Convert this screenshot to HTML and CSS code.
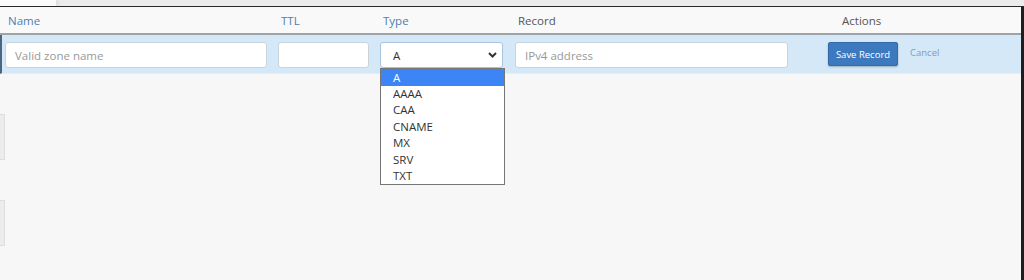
FILE: index.html
```html
<!DOCTYPE html>
<html lang="en">
<head>
<meta charset="UTF-8">
<title>Zone records</title>
<link rel="stylesheet" href="styles.css">
</head>
<body>
<div class="topbar"><div class="tab"></div></div>
<div class="panel">
  <div class="rec-head">
    <div class="th sortable">Name</div>
    <div class="th sortable">TTL</div>
    <div class="th sortable">Type</div>
    <div class="th">Record</div>
    <div class="th actions">Actions</div>
  </div>
  <div class="rec-edit">
    <div class="cell"><input class="field f-name" type="text" placeholder="Valid zone name"></div>
    <div class="cell"><input class="field f-ttl" type="text"></div>
    <div class="cell">
      <div class="select">
        <span>A</span>
        <svg class="chev" width="9" height="6" viewBox="0 0 9 6"><path d="M1 1l3.5 3.5L8 1" fill="none" stroke="#333" stroke-width="2"/></svg>
        <ul class="options">
          <li class="on">A</li>
          <li>AAAA</li>
          <li>CAA</li>
          <li>CNAME</li>
          <li>MX</li>
          <li>SRV</li>
          <li>TXT</li>
        </ul>
      </div>
    </div>
    <div class="cell"><input class="field f-rec" type="text" placeholder="IPv4 address"></div>
    <div class="cell act">
      <button class="btn">Save Record</button>
      <a class="cancel" href="#">Cancel</a>
    </div>
  </div>
  <div class="rest">
    <div class="stub"></div>
    <div class="stub"></div>
  </div>
</div>
</body>
</html>
```

FILE: styles.css
```css
*,*::before,*::after{margin:0;padding:0;box-sizing:border-box}
body{font-family:"Open Sans",sans-serif;font-size:11px;color:#444;background:#f7f7f7;width:1024px;height:280px;overflow:hidden}
.topbar{height:7px;background:#ececec;border-bottom:1px solid #2a2a2a}
.tab{width:56px;height:6px;background:#fafafa;box-shadow:2px 0 4px rgba(0,0,0,.08)}
.panel{border-right:3px solid #1e1e1e;height:273px;background:#f7f7f7}
.rec-head,.rec-edit{display:grid;grid-template-columns:273px 102px 135px 313px 1fr;padding-left:5px}
.rec-head{height:28px;align-items:center;background:#f9f9f9;border-bottom:2px solid #9ea3a8}
.th{padding-left:3px;font-size:11.5px;color:#555}
.th.sortable{color:#4d7fae}
.th.actions{padding-left:14px}
.rec-edit{height:39px;padding-top:7px;background:#d5e8f7;border-left:2px solid #4b6680;padding-left:3px;border-bottom:1px solid #e2eef8}
.field{display:block;height:26px;background:#fff;border:1px solid #c9d3dc;border-radius:3px;font-family:"Open Sans",sans-serif;font-size:11.5px;padding:0 9px;color:#333;outline:none}
.field::placeholder{color:#999}
.f-name{width:262px}
.f-ttl{width:91px}
.f-rec{width:273px}
.select{position:relative;width:123px;height:26px;background:#fff;border:1px solid #a9c4de;border-radius:3px;display:flex;align-items:center;justify-content:space-between;padding:0 5px 0 12px;font-size:11.5px;color:#333}
.chev{display:block}
.options{position:absolute;left:-1px;top:25px;width:125px;list-style:none;background:#fff;border:1px solid #767676;z-index:2}
.options li{height:16.4px;line-height:16.4px;padding-left:12px;font-size:11.5px;color:#333}
.options li.on{background:#3d84f5;color:#fff;height:17px;line-height:17px}
.act{display:flex;align-items:flex-start;gap:12px}
.btn{width:70px;height:24px;padding:0;background:#3c79bf;border:1px solid #346aa8;border-radius:2px;color:#fff;font-family:"Open Sans",sans-serif;font-size:9.5px;box-shadow:0 1px 2px rgba(0,0,0,.25)}
.cancel{line-height:22px;font-size:9.5px;color:#7f9cbb;text-decoration:none}
.rest{padding-top:40px}
.stub{width:5px;height:46px;background:#ececec;border:1px solid #dedede;border-left:none;margin-bottom:40px}
```
